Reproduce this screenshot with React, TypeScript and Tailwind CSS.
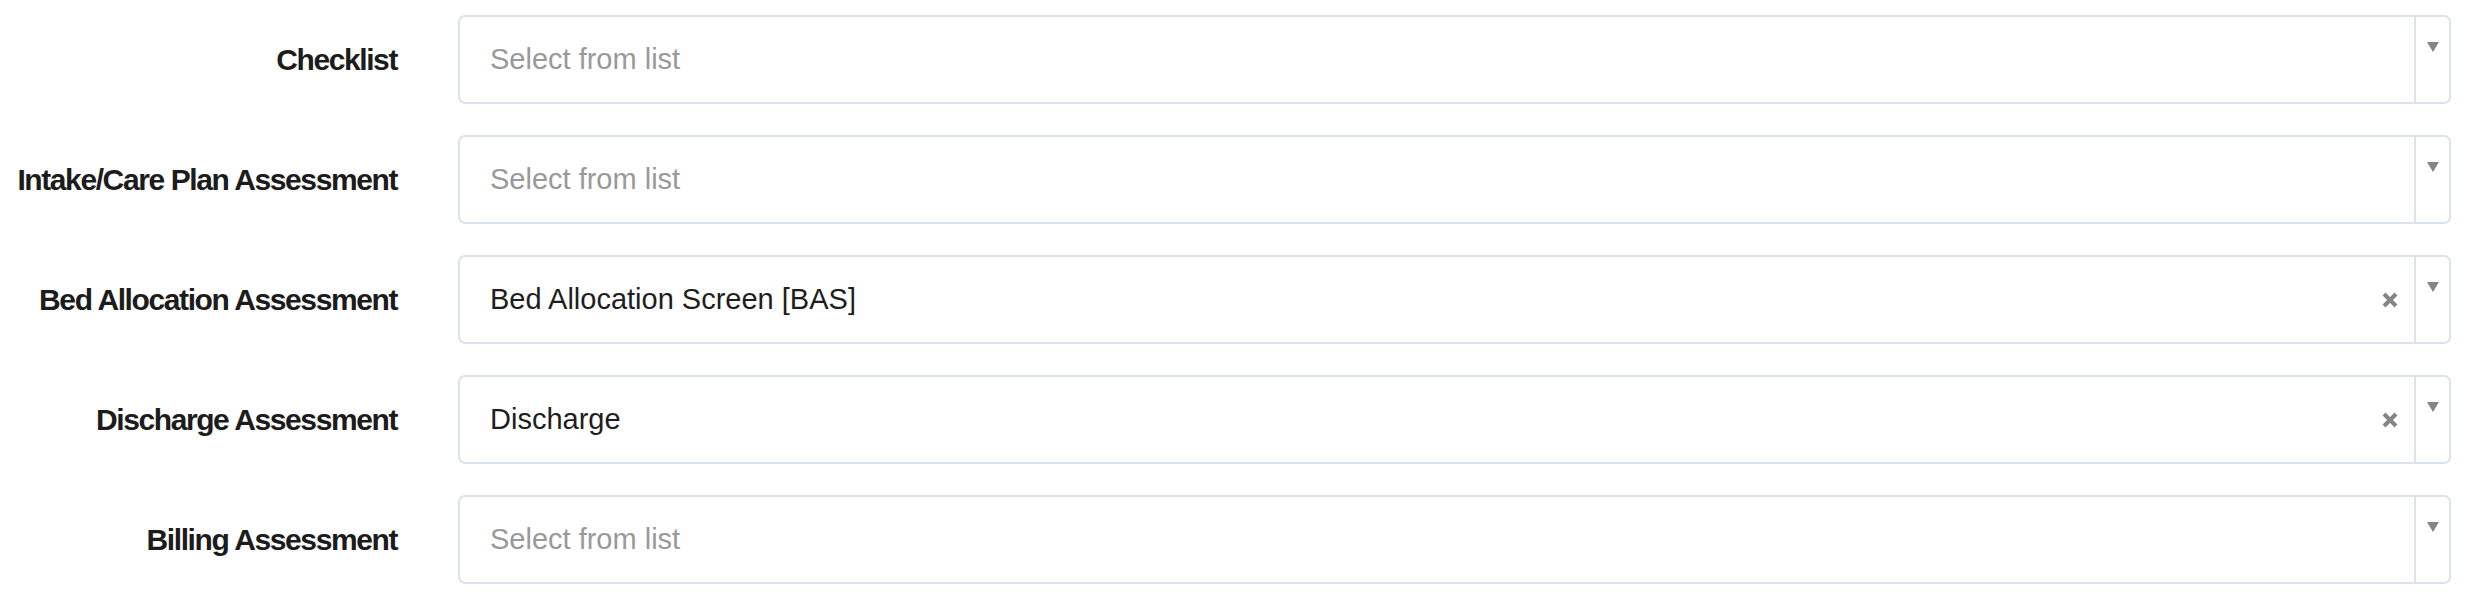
const fields = [
    { label: "Checklist", value: "" },
    { label: "Intake/Care Plan Assessment", value: "" },
    { label: "Bed Allocation Assessment", value: "Bed Allocation Screen [BAS]" },
    { label: "Discharge Assessment", value: "Discharge" },
    { label: "Billing Assessment", value: "" },
];

const ClearIcon = () => (
    <svg width="18" height="18" viewBox="0 0 18 18">
        <path d="M3 3 L15 15 M15 3 L3 15" stroke="#858585" strokeWidth="4" strokeLinecap="butt" />
    </svg>
);

const App = () => {
    return (
        <div className="w-full min-h-screen bg-white pt-[15px] flex flex-col gap-[31px]" style={{ fontFamily: '"Liberation Sans", Arial, sans-serif' }}>
            {fields.map((field, index) => (
                <div key={index} className="flex items-center">
                    {/* label */}
                    <div className="w-[397px] text-right font-bold text-[30px] tracking-[-1.4px] text-[#1c1c1c]">
                        {field.label}
                    </div>

                    {/* select box */}
                    <div className="ml-[61px] w-[1993px] h-[89px] flex border-2 border-[#dbe3ec] rounded-[7px] bg-white">
                        <div className={`flex-1 flex items-center pl-[30px] text-[29px] ${field.value ? "text-[#1e1e1e]" : "text-[#999999]"}`}>
                            {field.value || "Select from list"}
                        </div>
                        {field.value && (
                            <div className="flex items-center pr-[15px]">
                                <ClearIcon />
                            </div>
                        )}
                        <div className="w-[35px] border-l-2 border-[#dbe3ec] flex justify-center pt-[25px]">
                            <svg width="12" height="10" viewBox="0 0 12 10">
                                <path d="M0 0 L12 0 L6 10 Z" fill="#858585" />
                            </svg>
                        </div>
                    </div>
                </div>
            ))}
        </div>
    );
};

export default App;
